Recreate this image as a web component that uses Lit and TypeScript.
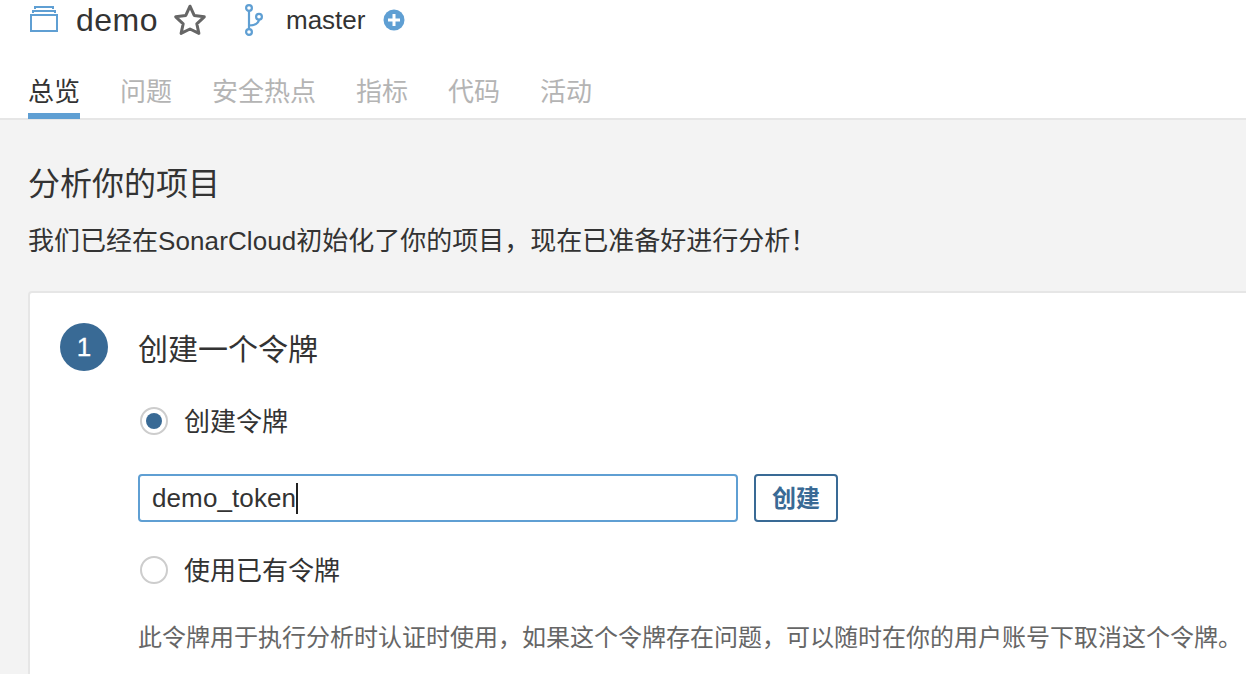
import { LitElement, html, css } from "lit";
import { customElement, state } from "lit/decorators.js";
import { classMap } from "lit/directives/class-map.js";

const TABS = ["总览", "问题", "安全热点", "指标", "代码", "活动"];

@customElement("app-root")
export class AppRoot extends LitElement {
  @state() private tab = 0;
  @state() private mode: "create" | "existing" = "create";

  static styles = css`
    :host {
      display: flex;
      flex-direction: column;
      width: 100%;
      height: 100vh;
      overflow: hidden;
      background: #f3f3f3;
      color: #333;
      font-family: "Liberation Sans", "Noto Sans CJK SC", sans-serif;
      font-size: 26px;
      line-height: 40px;
      white-space: nowrap;
    }
    * {
      box-sizing: border-box;
    }
    svg {
      display: block;
      flex: none;
    }
    header {
      flex: none;
      height: 120px;
      padding: 0 28px;
      background: #fff;
      border-bottom: 2px solid #e6e6e6;
    }
    .project {
      display: flex;
      align-items: center;
      height: 40px;
    }
    .name {
      width: 82px;
      margin-left: 16px;
      font-size: 32px;
      letter-spacing: 0.5px;
    }
    .star {
      margin-left: 14px;
    }
    .branch-icon {
      margin-left: 36px;
    }
    .branch {
      width: 80px;
      margin-left: 20px;
    }
    .plus {
      margin-left: 17px;
    }
    nav {
      display: flex;
      gap: 40px;
      height: 47px;
      margin-top: 32px;
    }
    .tab {
      height: 47px;
      color: #b4b4b4;
      border-bottom: 6px solid transparent;
      line-height: 40px;
    }
    .tab.active {
      color: #333;
      border-bottom-color: #5f9fd3;
    }
    main {
      flex: 1;
      display: flex;
      flex-direction: column;
      min-height: 0;
      padding: 40px 0 0 28px;
    }
    h1,
    h2,
    p {
      margin: 0;
      font-weight: 400;
    }
    h1 {
      font-size: 32px;
      line-height: 48px;
    }
    .lead {
      margin-top: 13px;
    }
    .latin {
      letter-spacing: 0.1px;
    }
    .card {
      flex: 1;
      display: flex;
      align-items: flex-start;
      gap: 30px;
      margin: 30px -10px -10px 0;
      padding: 30px;
      background: #fff;
      border: 2px solid #e6e6e6;
      border-radius: 4px;
    }
    .number {
      flex: none;
      width: 48px;
      height: 48px;
      border-radius: 50%;
      background: #396a95;
      color: #fff;
      -webkit-text-stroke: 0.3px #fff;
      text-align: center;
      line-height: 48px;
    }
    h2 {
      margin-top: 7px;
      font-size: 30px;
    }
    .option {
      display: flex;
      align-items: center;
      gap: 16px;
      height: 40px;
      padding-left: 2px;
    }
    .label {
      padding-top: 2px;
    }
    .first {
      margin-top: 31px;
    }
    .second {
      margin-top: 28px;
    }
    .radio {
      display: grid;
      place-items: center;
      width: 28px;
      height: 28px;
      border: 2px solid #cdcdcd;
      border-radius: 50%;
    }
    .dot {
      width: 16px;
      height: 16px;
      border-radius: 50%;
      background: #396a95;
    }
    .form {
      display: flex;
      gap: 16px;
      margin-top: 33px;
    }
    .field {
      display: flex;
      align-items: center;
      width: 600px;
      height: 48px;
      padding: 0 12px;
      border: 2px solid #5f9fd3;
      border-radius: 4px;
      letter-spacing: 0.1px;
    }
    .caret {
      width: 2px;
      height: 31px;
      background: #222;
    }
    .create {
      width: 84px;
      height: 48px;
      border: 2px solid #396a95;
      border-radius: 4px;
      color: #396a95;
      font-size: 24px;
      font-weight: 700;
      line-height: 46px;
      text-align: center;
    }
    .note {
      margin-top: 28px;
      color: #666;
      font-size: 24px;
    }
  `;

  private option(mode: "create" | "existing", label: string, cls: string) {
    return html`<div class="option ${cls}" @click=${() => (this.mode = mode)}>
      <span class="radio">${this.mode === mode ? html`<span class="dot"></span>` : ""}</span>
      <span class="label">${label}</span>
    </div>`;
  }

  render() {
    return html`
      <header>
        <div class="project">
          <svg width="32" height="40" viewBox="0 0 32 40" fill="none" stroke="#5f9fd3" stroke-width="2">
            <path d="M3 15H29V31H3ZM5 13V11H27V13M7 9V7H25V9" />
          </svg>
          <span class="name">demo</span>
          <svg class="star" width="36" height="40" viewBox="0 0 36 40" fill="none" stroke="#666" stroke-width="3" stroke-linejoin="round">
            <path d="M18 6.2L22.2 15.4L32.3 16.8L24.8 23.8L26.9 33.4L18 29L9.1 33.4L11.2 23.8L3.7 16.8L13.8 15.4Z" />
          </svg>
          <svg class="branch-icon" width="22" height="40" viewBox="0 0 22 40" fill="none" stroke="#5f9fd3" stroke-width="2.2">
            <circle cx="5" cy="8" r="2.9" />
            <circle cx="5" cy="32" r="2.9" />
            <circle cx="15" cy="16.7" r="2.9" />
            <path d="M5 11V29M15 19.7C14.5 23.5 11 25.3 5 25.5" />
          </svg>
          <span class="branch">master</span>
          <svg class="plus" width="22" height="40" viewBox="0 0 22 40">
            <circle cx="11" cy="20" r="10.5" fill="#5f9fd3" />
            <path d="M11 14V26M5 20H17" stroke="#fff" stroke-width="3" />
          </svg>
        </div>
        <nav>
          ${TABS.map(
            (label, i) => html`<div
              class=${classMap({ tab: true, active: this.tab === i })}
              @click=${() => (this.tab = i)}
            >${label}</div>`
          )}
        </nav>
      </header>
      <main>
        <h1>分析你的项目</h1>
        <p class="lead">我们已经在<span class="latin">SonarCloud</span>初始化了你的项目，现在已准备好进行分析！</p>
        <section class="card">
          <div class="number">1</div>
          <div>
            <h2>创建一个令牌</h2>
            ${this.option("create", "创建令牌", "first")}
            <div class="form">
              <div class="field"><span>demo_token</span><span class="caret"></span></div>
              <div class="create">创建</div>
            </div>
            ${this.option("existing", "使用已有令牌", "second")}
            <p class="note">此令牌用于执行分析时认证时使用，如果这个令牌存在问题，可以随时在你的用户账号下取消这个令牌。</p>
          </div>
        </section>
      </main>
    `;
  }
}
